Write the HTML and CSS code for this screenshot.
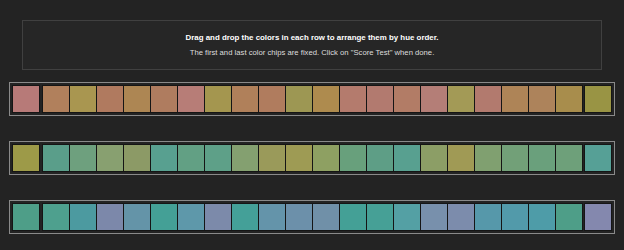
FILE: index.html
```html
<!DOCTYPE html>
<html>
  <head>
    <title>Hue Order Test</title>
    <meta name="viewport" content="width=device-width, initial-scale=1.0" />
    <link rel="stylesheet" href="styles.css">
  </head>

  <body>
    <div class="instructions">
      <p class="lead">Drag and drop the colors in each row to arrange them by hue order.</p>
      <p class="note">The first and last color chips are fixed. Click on "Score Test" when done.</p>
    </div>

    <!-- Rows are filled in by the script below -->
    <div class="rows" id="rows"></div>

    <script>
      const rows = [
        ["#b77a78", "#b1805c", "#a99650", "#b07a5f", "#ad8653", "#af7c5f", "#b77d77", "#a4964f",
         "#b0805a", "#b07c5e", "#9d9753", "#ae8b4e", "#b47b6d", "#b27a6f", "#b27c66", "#b47e77",
         "#a39a56", "#b27a6e", "#ae8457", "#ad835b", "#a88d4c", "#999444"],
        ["#9d9a48", "#5a9e8a", "#6ea07e", "#88a070", "#8c9a66", "#58a090", "#62a084", "#5ea088",
         "#84a070", "#9a9a5a", "#9e9b54", "#8ea062", "#68a07c", "#5e9e86", "#58a090", "#8c9e66",
         "#a09a55", "#80a070", "#72a078", "#6aa07c", "#6ea07a", "#56a096"],
        ["#4e9e88", "#4ea08e", "#4c9aa0", "#7c88aa", "#6494a8", "#44a096", "#5e98aa", "#7c8aaa",
         "#44a098", "#6494aa", "#6c90aa", "#7090a8", "#44a096", "#46a096", "#54a0a4", "#7890ac",
         "#7c8cac", "#5698aa", "#529aaa", "#4e9ca8", "#4e9e88", "#8488ae"]
      ];

      function makeChip(color, fixed) {
        const chip = document.createElement("div");
        chip.className = fixed ? "chip fixed" : "chip";
        chip.style.backgroundColor = color;
        return chip;
      }

      const container = document.getElementById("rows");

      rows.forEach((colors) => {
        const row = document.createElement("div");
        row.className = "chip-row";

        const movable = document.createElement("div");
        movable.className = "movable";
        colors.slice(1, -1).forEach((c) => movable.appendChild(makeChip(c, false)));

        row.appendChild(makeChip(colors[0], true));
        row.appendChild(movable);
        row.appendChild(makeChip(colors[colors.length - 1], true));
        container.appendChild(row);
      });
    </script>
  </body>
</html>
```

FILE: styles.css
```css
/* Dark page for the hue test */
body {
  font-family: "Liberation Sans", Arial, Helvetica, sans-serif;
  margin: 0;
  padding: 0;
  background-color: #232323;
}

.instructions {
  margin: 20px 22px 0;
  padding: 9px 0;
  border: 1px solid #404040;
  background-color: #262626;
  text-align: center;
}

.instructions p {
  margin: 0;
  line-height: 15px;
}

.lead {
  font-size: 7.9px;
  font-weight: bold;
  color: #ffffff;
}

.note {
  font-size: 7.7px;
  color: #dddddd;
}

.rows {
  display: flex;
  flex-direction: column;
  gap: 25px;
  margin: 12px 9px 0;
}

.chip-row {
  display: flex;
  justify-content: space-between;
  align-items: center;
  padding: 2px;
  border: 1px solid #8a8a8a;
}

.chip {
  width: 26px;
  height: 26px;
}

.chip.fixed {
  border: 1px solid #151515;
}

.movable {
  display: flex;
  gap: 1px;
  padding: 1px;
  background-color: #151515;
}
```
